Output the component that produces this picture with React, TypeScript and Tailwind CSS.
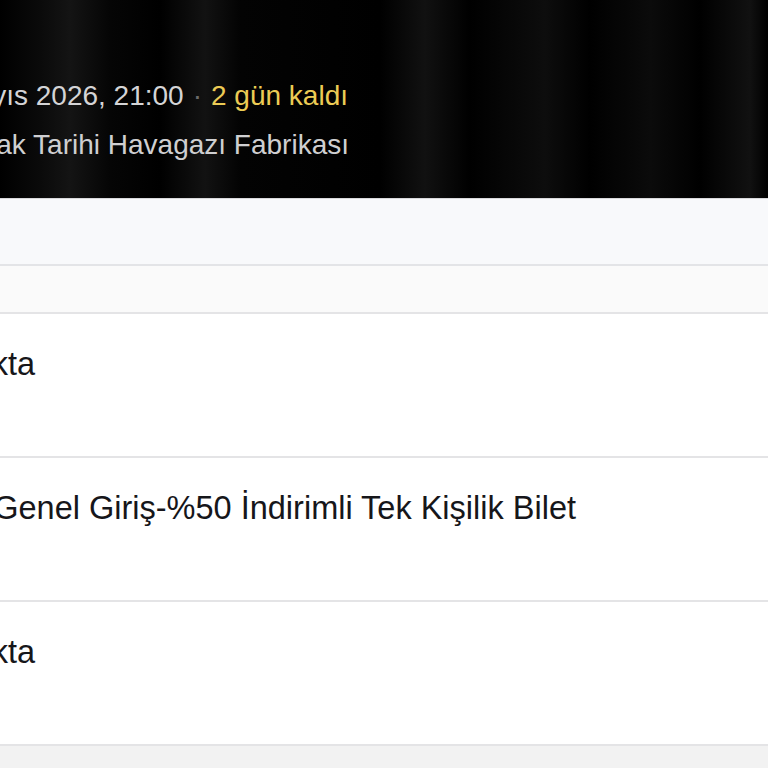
const rows = [
  { name: "Stokta", end: "w-[35px]" },
  { name: "Genel Giriş-%50 İndirimli Tek Kişilik Bilet", end: "w-[576px]" },
  { name: "Stokta", end: "w-[35px]" },
];

const App = () => {
  return (
    <div className="h-[768px] w-[768px] overflow-hidden bg-[#f2f2f2] font-['Liberation_Sans',Arial,sans-serif]">
      <div className="h-[198px] bg-[linear-gradient(90deg,#000_0px,#0a0a0a_40px,#141414_70px,#050505_110px,#000_160px,#121212_205px,#030303_240px,#000_380px,#111_425px,#000_470px,#0d0d0d_545px,#000_590px,#0b0b0b_650px,#000_700px,#111_750px,#000_768px)] pt-[78px]">
        <div className="flex w-[348px] items-baseline justify-end whitespace-nowrap text-[28px] leading-[36px]">
          <span className="text-[#d4d4d6]">23 Mayıs 2026, 21:00</span>
          <span className="mx-[9px] text-[#6b6b6b]">·</span>
          <span className="text-[#eccb55]">2 gün kaldı</span>
        </div>
        <div className="mt-[13px] flex w-[349px] justify-end whitespace-nowrap text-[28px] leading-[36px] text-[#cfcfd1]">
          İzmir Alsancak Tarihi Havagazı Fabrikası
        </div>
      </div>
      <div className="h-[66px] border-t border-[#d9d9dc] bg-[#f8f9fb]" />
      <div className="h-[48px] border-t-2 border-[#e3e4e7] bg-[#fafafa]" />
      {rows.map((row, i) => (
        <div
          key={i}
          className="h-[144px] border-t-2 border-[#e4e4e6] bg-white pt-[30px]"
        >
          <div
            className={`${row.end} flex justify-end whitespace-nowrap text-[32.5px] leading-[40px] text-[#16161a]`}
          >
            {row.name}
          </div>
        </div>
      ))}
      <div className="border-t-2 border-[#e4e4e6] bg-[#f2f2f2]" />
    </div>
  );
};

export default App;
